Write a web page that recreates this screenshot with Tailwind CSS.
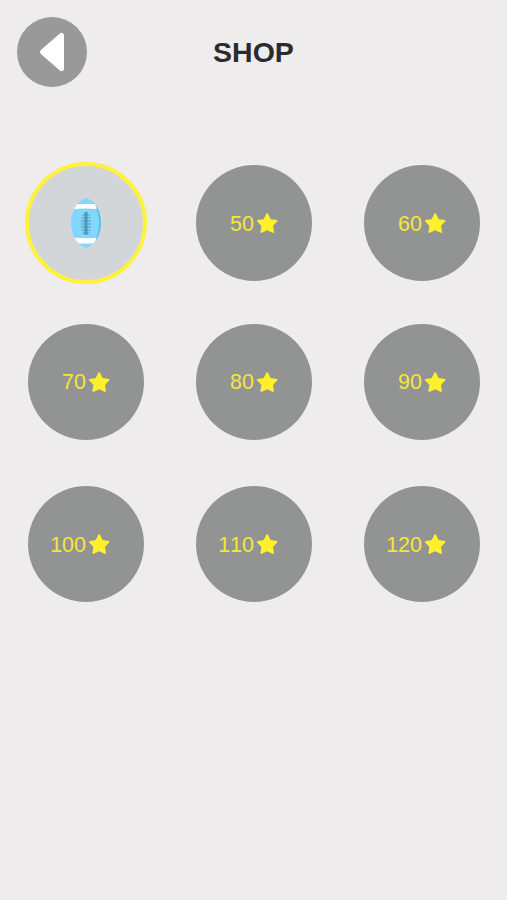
<!DOCTYPE html>
<html lang="en">
<head>
  <meta charset="UTF-8">
  <meta name="viewport" content="width=device-width, initial-scale=1.0">
  <title>Shop</title>
  <script src="https://cdn.jsdelivr.net/npm/@tailwindcss/browser@4"></script>
</head>
<body class="min-h-screen bg-[#eeecec] font-['Liberation_Sans',Arial,sans-serif]">
  <svg class="hidden">
    <symbol id="star" viewBox="0 0 22 22">
      <path d="M11.200 2.200L14 7.900L20.500 8.900L15.900 13.500L17 19.900L11.200 17L5.400 19.900L6.500 13.500L1.900 8.900L8.400 7.900Z" fill="#fff02c" stroke="#fff02c" stroke-width="2" stroke-linejoin="round"/>
    </symbol>
  </svg>

  <header class="grid grid-cols-[70px_1fr_70px] items-center px-[17px] pt-[17px]">
    <button class="size-[70px] rounded-full bg-[#999999]" aria-label="Back">
      <svg class="size-[70px]" viewBox="0 0 70 70">
        <path d="M25.500 35L44.500 18.500V51.500Z" fill="#fff" stroke="#fff" stroke-width="5" stroke-linejoin="round"/>
      </svg>
    </button>
    <h1 class="pt-px text-center text-[28.5px] leading-none font-bold text-[#2b2b2d]">SHOP</h1>
  </header>

  <main class="mt-[78px] ml-7 grid grid-cols-[repeat(3,116px)] grid-rows-[158px_163px_116px] gap-x-[52px] [font-kerning:none]">
    <div class="-m-[3px] flex size-[122px] items-center justify-center rounded-full border-4 border-[#fff23c] bg-[#d3d6d9]">
      <svg class="h-[52px] w-8" viewBox="0 0 32 52">
        <clipPath id="ball"><path d="M16 1C25 4 31 14 31 26S25 48 16 51C7 48 1 38 1 26S7 4 16 1Z"/></clipPath>
        <g clip-path="url(#ball)">
          <rect width="32" height="52" fill="#80d8fe"/>
          <path d="M17 0C25 5 29 15 29 26S25 47 17 52H32V0Z" fill="#65bce3"/>
          <path d="M0 7H25Q26.500 9 26.500 12Q14 11 0 12.500ZM0 40.500Q14 41.500 26.500 41Q26 44 24 46.500H0Z" fill="#fff"/>
        </g>
        <path d="M16 15V38" stroke="#5397b1" stroke-width="3"/>
        <path d="M12.500 18H19.500M11.500 21H20.500M11 24H21M11 27H21M11 30H21M11.500 33H20.500M12.500 36H19.500" stroke="#5397b1" stroke-width="1.200"/>
      </svg>
    </div>
    <div class="grid size-[116px] grid-cols-2 items-center rounded-full bg-[#929493] text-[21.5px] leading-none text-[#f5e637]"><span class="pt-[3px] text-right">50</span><svg class="ml-0.5 size-[22px]"><use href="#star"/></svg></div>
    <div class="grid size-[116px] grid-cols-2 items-center rounded-full bg-[#929493] text-[21.5px] leading-none text-[#f5e637]"><span class="pt-[3px] text-right">60</span><svg class="ml-0.5 size-[22px]"><use href="#star"/></svg></div>
    <div class="mt-[0.5px] grid size-[116px] grid-cols-2 items-center rounded-full bg-[#929493] text-[21.5px] leading-none text-[#f5e637]"><span class="pt-[3px] text-right">70</span><svg class="ml-0.5 size-[22px]"><use href="#star"/></svg></div>
    <div class="mt-[0.5px] grid size-[116px] grid-cols-2 items-center rounded-full bg-[#929493] text-[21.5px] leading-none text-[#f5e637]"><span class="pt-[3px] text-right">80</span><svg class="ml-0.5 size-[22px]"><use href="#star"/></svg></div>
    <div class="mt-[0.5px] grid size-[116px] grid-cols-2 items-center rounded-full bg-[#929493] text-[21.5px] leading-none text-[#f5e637]"><span class="pt-[3px] text-right">90</span><svg class="ml-0.5 size-[22px]"><use href="#star"/></svg></div>
    <div class="grid size-[116px] grid-cols-2 items-center rounded-full bg-[#929493] text-[21.5px] leading-none text-[#f5e637]"><span class="pt-[3px] text-right">100</span><svg class="ml-0.5 size-[22px]"><use href="#star"/></svg></div>
    <div class="grid size-[116px] grid-cols-2 items-center rounded-full bg-[#929493] text-[21.5px] leading-none text-[#f5e637]"><span class="pt-[3px] text-right">110</span><svg class="ml-0.5 size-[22px]"><use href="#star"/></svg></div>
    <div class="grid size-[116px] grid-cols-2 items-center rounded-full bg-[#929493] text-[21.5px] leading-none text-[#f5e637]"><span class="pt-[3px] text-right">120</span><svg class="ml-0.5 size-[22px]"><use href="#star"/></svg></div>
  </main>
</body>
</html>
